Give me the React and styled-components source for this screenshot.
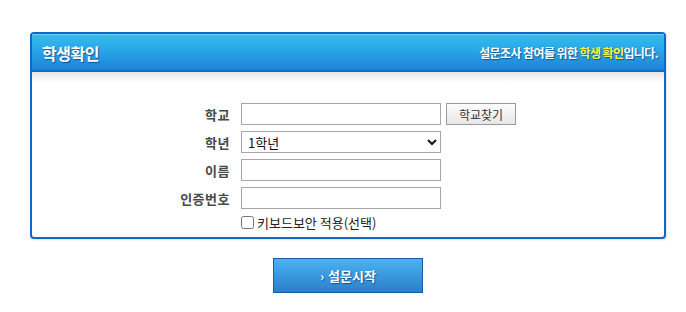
import React from 'react';
import styled, { createGlobalStyle } from 'styled-components';

const GlobalStyle = createGlobalStyle`
  body {
    margin: 0;
    background: #fff;
    font-family: 'Noto Sans CJK KR', 'Noto Sans', sans-serif;
    color: #222;
  }
`;

const Page = styled.div`
  padding: 32px 0 0 30px;
  width: 636px;
`;

const Panel = styled.section`
  box-sizing: border-box;
  width: 636px;
  border: 2px solid #0b68d0;
  border-radius: 4px;
  background: #fff;
  box-shadow: 1px 1px 2px rgba(0, 0, 0, 0.12);
  overflow: hidden;
`;

const Header = styled.div`
  display: flex;
  align-items: center;
  justify-content: space-between;
  height: 35px;
  padding: 0 6px 0 10px;
  background: linear-gradient(to bottom, #33bcee 0%, #29a8e6 40%, #1f82d8 100%);
  border-top: 1px solid #6fd0f4;
  border-bottom: 2px solid #0e6bd0;
`;

const Title = styled.h1`
  margin: 0;
  font-size: 16px;
  font-weight: bold;
  color: #fff;
  letter-spacing: -0.5px;
  text-shadow: 1px 1px 1px rgba(0, 40, 100, 0.6);
`;

const Notice = styled.p`
  margin: 0;
  font-size: 12px;
  font-weight: bold;
  color: #fff;
  letter-spacing: -0.6px;
  text-shadow: 1px 1px 1px rgba(0, 40, 100, 0.6);
`;

const Mark = styled.span`
  color: #fff23a;
`;

const Shade = styled.div`
  height: 10px;
  background: linear-gradient(to bottom, #e4e4e4, #fff);
`;

const Form = styled.form`
  display: grid;
  grid-template-columns: 198px auto;
  column-gap: 11px;
  row-gap: 6px;
  align-items: center;
  justify-content: start;
  padding: 21px 0 8px;
`;

const Label = styled.label`
  text-align: right;
  font-size: 13px;
  font-weight: bold;
  color: #484848;
  letter-spacing: 0.5px;
`;

const Field = styled.div`
  display: flex;
  align-items: center;
  gap: 5px;
  height: 22px;
`;

const TextInput = styled.input`
  box-sizing: border-box;
  width: 200px;
  height: 22px;
  border: 1px solid #a6a6a6;
  padding: 0 4px;
  font-family: inherit;
  font-size: 13px;
`;

const Select = styled.select`
  box-sizing: border-box;
  width: 200px;
  height: 22px;
  border: 1px solid #a6a6a6;
  border-radius: 0;
  padding: 0 0 0 2px;
  font-family: inherit;
  font-size: 13px;
  color: #111;
  background: #fff;
`;

const FindButton = styled.button`
  box-sizing: border-box;
  width: 70px;
  height: 22px;
  border: 1px solid #9a9a9a;
  background: linear-gradient(to bottom, #fdfdfd, #e6e6e6);
  font-family: inherit;
  font-size: 12px;
  color: #333;
  padding: 0;
`;

const Check = styled.label`
  grid-column: 2;
  display: flex;
  align-items: center;
  gap: 3px;
  font-size: 13px;
  color: #222;
  height: 14px;
`;

const Box = styled.input`
  margin: 0;
  width: 13px;
  height: 13px;
`;

const Footer = styled.div`
  display: flex;
  justify-content: center;
  padding-top: 19px;
`;

const StartButton = styled.button`
  box-sizing: border-box;
  width: 150px;
  height: 35px;
  border: 1px solid #155ba6;
  background: linear-gradient(to bottom, #4cb2ef 0%, #3a98de 50%, #2c80cb 100%);
  color: #fff;
  font-family: inherit;
  font-size: 13px;
  font-weight: bold;
  text-shadow: 1px 1px 1px rgba(0, 40, 100, 0.6);
  padding: 0;
`;

const Arrow = styled.span`
  font-size: 12px;
  margin-right: 4px;
`;

export default function App() {
  return (
    <Page>
      <GlobalStyle />
      <Panel>
        <Header>
          <Title>학생확인</Title>
          <Notice>
            설문조사 참여를 위한 <Mark>학생 확인</Mark>입니다.
          </Notice>
        </Header>
        <Shade />
        <Form onSubmit={e => e.preventDefault()}>
          <Label>학교</Label>
          <Field>
            <TextInput type="text" />
            <FindButton type="button">학교찾기</FindButton>
          </Field>

          <Label>학년</Label>
          <Field>
            <Select defaultValue="1">
              <option value="1">1학년</option>
              <option value="2">2학년</option>
              <option value="3">3학년</option>
            </Select>
          </Field>

          <Label>이름</Label>
          <Field>
            <TextInput type="text" />
          </Field>

          <Label>인증번호</Label>
          <Field>
            <TextInput type="text" />
          </Field>

          <Check>
            <Box type="checkbox" />
            키보드보안 적용(선택)
          </Check>
        </Form>
      </Panel>
      <Footer>
        <StartButton type="button">
          <Arrow>›</Arrow>설문시작
        </StartButton>
      </Footer>
    </Page>
  );
}
